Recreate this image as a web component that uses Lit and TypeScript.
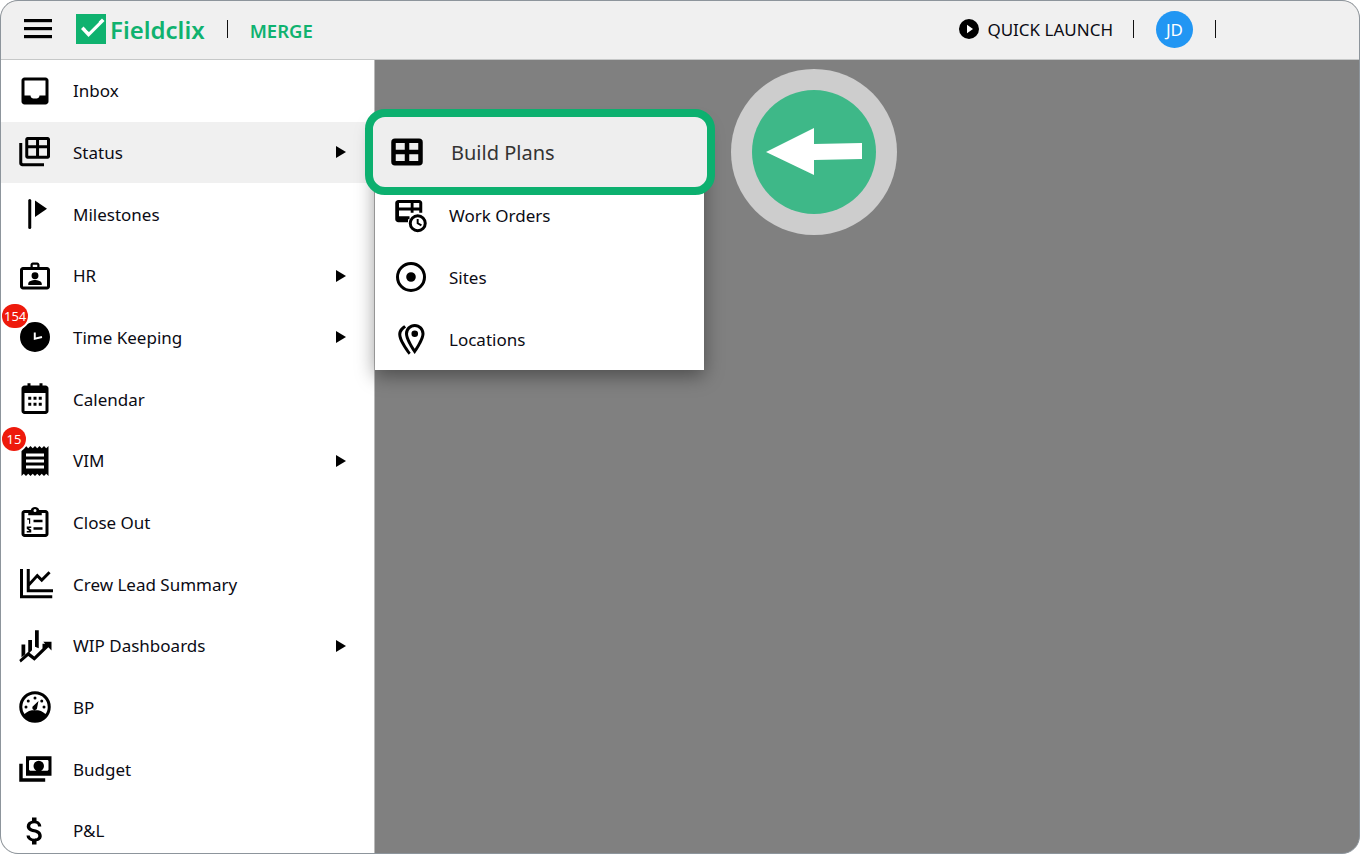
import { LitElement, html, svg, css } from "lit";
import { customElement } from "lit/decorators.js";

const p = (d: string) => svg`<path d=${d}></path>`;
const icons: Record<string, unknown> = {
  inbox: p("M19 3H5C3.9 3 3 3.9 3 5v14c0 1.1.9 2 2 2h14c1.1 0 2-.9 2-2V5c0-1.1-.9-2-2-2zm0 12h-4c0 1.66-1.35 2-3 2s-3-.34-3-2H5V5h14v10z"),
  status: svg`<path d="M7 2h13.5c.8 0 1.5.7 1.5 1.5V15c0 .8-.7 1.5-1.5 1.5H7c-.8 0-1.5-.7-1.5-1.5V3.500C5.500 2.700 6.200 2 7 2zm.5 2v3.500h5.200V4zm7.200 0v3.500H20V4zM7.500 9.500v5h5.200v-5zm7.200 0v5H20v-5z"></path><path d="M1.500 6h2v13c0 .3.200.500.500.500h14v2H3.500c-1.100 0-2-.9-2-2z"></path>`,
  flag: svg`<rect x="7.500" y="2" width="2" height="20" rx="1"></rect><path d="M12 3v11l8-5.500z"></path>`,
  badge: p("M9 6V4.500C9 3.700 9.700 3 10.500 3h3c.8 0 1.500.7 1.500 1.500V6h5c1.100 0 2 .9 2 2v11c0 1.100-.9 2-2 2H4c-1.100 0-2-.9-2-2V8c0-1.100.9-2 2-2zm1.500 0h3V4.500h-3zM4 8v11h16V8zm8 1.500a2.300 2.300 0 1 1 0 4.600 2.300 2.300 0 0 1 0-4.600zM7.500 18v-1c0-1.500 3-2.300 4.500-2.300s4.500.8 4.500 2.300v1z"),
  clock: svg`<path fill-rule="evenodd" d="M12 2a10 10 0 1 0 0 20 10 10 0 0 0 0-20zm-.8 7h1.300v3.300l4-1 .3 1.300-5.600 1.400z"></path>`,
  calendar: p("M7 1.500h2V3h6V1.500h2V3h2c1.100 0 2 .9 2 2v15c0 1.100-.9 2-2 2H5c-1.100 0-2-.9-2-2V5c0-1.100.9-2 2-2h2zM5 8v12h14V8zm2.500 2.500h2v2h-2zm3.500 0h2v2h-2zm3.500 0h2v2h-2zm-7 4h2v2h-2zm3.500 0h2v2h-2zm3.500 0h2v2h-2z"),
  receipt: p("M18 17H6v-2h12v2zm0-4H6v-2h12v2zm0-4H6V7h12v2zM3 22l1.500-1.500L6 22l1.500-1.500L9 22l1.500-1.500L12 22l1.500-1.500L15 22l1.500-1.500L18 22l1.500-1.500L21 22V2l-1.500 1.500L18 2l-1.500 1.500L15 2l-1.500 1.500L12 2l-1.500 1.500L9 2 7.500 3.500 6 2 4.500 3.500 3 2v20z"),
  clip: p("M5 4h4.200a3 3 0 0 1 5.600 0H19c1.100 0 2 .9 2 2v14c0 1.100-.9 2-2 2H5c-1.100 0-2-.9-2-2V6c0-1.100.9-2 2-2zm7-.7a1 1 0 1 0 0 2 1 1 0 0 0 0-2zM5 6v14h14V6h-2.500v1.500h-9V6zm1.800 3.500h2v3.700H8V10.500h-1.200zm4.200 1h6v1.700h-6zM6.500 15h3v1h-1.800l1.800 1.200V19h-3v-1h1.800l-1.800-1.500zm4.500.5h6v1.700h-6z"),
  chart: p("M2 2h2v17.500h19.500v2H2zm4.500 0h2v8.500l5-5.500 3 3L21 3.500l1.400 1.400-5.900 6-3-3-5 5.500V15.500h17v2h-19z"),
  wip: p("M3 11h2.500v6.500L3 19.500zm4.500-3H10v6.800l-2.500 2.500zm4.500-6.500h2.500v12L12 12.500zm5 9h2.500v1.800L17 15.800zM2.500 23l-1-1.700 6-5.500 4 3.200 8-7.800-2-2h5.500V15l-2.100-2.100-9.300 9-4.100-3.200z"),
  gauge: p("M12 1.500a10.500 10.500 0 1 0 0 21 10.500 10.500 0 0 0 0-21zm0 2a8.500 8.500 0 0 1 8.500 8.500c0 1.800-.5 3.400-1.500 4.700-1.600-1.600-4.100-2.700-7-2.700s-5.400 1.100-7 2.700A8.400 8.400 0 0 1 3.500 12 8.500 8.500 0 0 1 12 3.500zM12 5a1 1 0 1 0 0 2 1 1 0 0 0 0-2zM7.500 7a1 1 0 1 0 0 2 1 1 0 0 0 0-2zm9 0a1 1 0 1 0 0 2 1 1 0 0 0 0-2zM6 11a1 1 0 1 0 0 2 1 1 0 0 0 0-2zm12 0a1 1 0 1 0 0 2 1 1 0 0 0 0-2zm-3.700-3L11 11.100a1.600 1.600 0 1 0 2.400 1.500z"),
  money: p("M6 3.500h17v13H6zm2.500 2.500a2.500 2.500 0 0 1-.500.500v6c.3.200.5.400.6.600h11.800c.2-.2.400-.4.600-.6v-6a2.500 2.500 0 0 1-.500-.500zm6 .500a3.500 3.500 0 1 1 0 7 3.500 3.500 0 0 1 0-7zM1.500 8.500h2.300v9.700h15v2.300H1.500z"),
  dollar: p("M11.800 10.900c-2.270-.59-3-1.200-3-2.150 0-1.090 1.010-1.850 2.700-1.850 1.780 0 2.440.85 2.500 2.100h2.210c-.07-1.720-1.120-3.300-3.210-3.810V3h-3v2.160c-1.940.42-3.500 1.680-3.500 3.610 0 2.310 1.910 3.460 4.700 4.130 2.500.6 3 1.480 3 2.410 0 .69-.49 1.790-2.700 1.790-2.060 0-2.870-.92-2.980-2.100h-2.200c.12 2.190 1.760 3.420 3.680 3.830V21h3v-2.150c1.950-.37 3.500-1.500 3.500-3.550 0-2.840-2.430-3.810-4.700-4.400z"),
  table: svg`<path d="M4 3h16a2.500 2.500 0 0 1 2.500 2.500v13A2.500 2.500 0 0 1 20 21H4a2.500 2.500 0 0 1-2.500-2.500v-13A2.500 2.500 0 0 1 4 3zm.5 3v4.500h6V6zm9 0v4.500h6V6zm-9 7.500V18h6v-4.500zm9 0V18h6v-4.500z"></path>`,
  workorder: svg`<path d="M3.500 2h14c1.100 0 2 .9 2 2v6.500h-2V9h-3.800v1.500h-1.900V9H4v3.800h7v2h-1v2H3.500c-1.100 0-2-.9-2-2V4c0-1.100.9-2 2-2zM4 4v3h7.800V4zm9.700 0v3h3.800V4z"></path><path d="M16.500 11.500a6 6 0 1 0 0 12 6 6 0 0 0 0-12zm0 2a4 4 0 1 1 0 8 4 4 0 0 1 0-8zm-.7 1.200v3.100l2.800 1.700.7-1.100-2.200-1.300v-2.400z"></path>`,
  sites: p("M12 2a10 10 0 1 0 0 20 10 10 0 0 0 0-20zm0 2a8 8 0 1 1 0 16 8 8 0 0 1 0-16zm0 4.800a3.200 3.200 0 1 0 0 6.400 3.200 3.200 0 0 0 0-6.400z"),
  pin: p("M14.500 2c3.600 0 6.500 2.900 6.500 6.500 0 4.600-6.500 13.500-6.500 13.500S8 13.100 8 8.500C8 4.900 10.900 2 14.500 2zm0 2A4.500 4.500 0 0 0 10 8.500c0 2.700 2.900 7.500 4.500 10 1.600-2.500 4.500-7.300 4.500-10A4.500 4.500 0 0 0 14.500 4zm0 2.300a2.200 2.200 0 1 1 0 4.400 2.200 2.200 0 0 1 0-4.400zM7.500 2.800l1.200 1.500C6.900 5.500 5.500 7.200 5.500 9c0 3 3.800 8.700 6.300 12.200L10.500 22.500C7 18 3.500 12.500 3.500 9c0-2.800 1.700-4.900 4-6.200z"),
};

const ic = (name: string, cls = "icon") =>
  html`<svg class=${cls} viewBox="0 0 24 24" aria-hidden="true">${icons[name]}</svg>`;

interface Item { label: string; icon: string; more?: boolean; active?: boolean; badge?: string; }

const items: Item[] = [
  { label: "Inbox", icon: "inbox" },
  { label: "Status", icon: "status", more: true, active: true },
  { label: "Milestones", icon: "flag" },
  { label: "HR", icon: "badge", more: true },
  { label: "Time Keeping", icon: "clock", more: true, badge: "154" },
  { label: "Calendar", icon: "calendar" },
  { label: "VIM", icon: "receipt", more: true, badge: "15" },
  { label: "Close Out", icon: "clip" },
  { label: "Crew Lead Summary", icon: "chart" },
  { label: "WIP Dashboards", icon: "wip", more: true },
  { label: "BP", icon: "gauge" },
  { label: "Budget", icon: "money" },
  { label: "P&L", icon: "dollar" },
];

const subItems = [
  { label: "Work Orders", icon: "workorder" },
  { label: "Sites", icon: "sites" },
  { label: "Locations", icon: "pin" },
];

@customElement("app-root")
export class AppRoot extends LitElement {
  static styles = css`
    :host { display: block; width: 1360px; height: 854px; background: #fff; font-family: "Noto Sans", "Liberation Sans", sans-serif; color: #0b0b14; }
    .window { position: relative; box-sizing: border-box; width: 1360px; height: 854px; border: 1px solid #8d959c; border-radius: 18px; overflow: hidden; display: flex; flex-direction: column; background: #808080; }
    .header { flex: none; box-sizing: border-box; height: 59px; background: #f0f0f0; border-bottom: 1px solid #c6c8c8; display: flex; align-items: center; padding-left: 23px; }
    .burger { width: 28px; height: 20px; display: block; margin-top: -2px; }
    .logo { width: 30px; height: 30px; margin-left: 24px; margin-top: -3px; display: block; }
    .brand { margin-left: 4px; font-size: 24px; font-weight: 600; color: #0fb26f; margin-top: -2px; letter-spacing: 0; }
    .sep { width: 1px; height: 18px; background: #111; flex: none; margin-top: -3px; }
    .sep.a { margin-left: 22px; }
    .merge { margin-left: 22px; font-size: 18.500px; font-weight: 600; color: #0fb26f; }
    .spacer { flex: 1; }
    .play { width: 20px; height: 20px; display: block; margin-top: -2px; }
    .quick { margin-left: 8px; font-size: 17px; margin-top: -2px; }
    .sep.b { margin-left: 20px; }
    .avatar { margin-left: 22px; width: 37px; height: 37px; border-radius: 50%; background: #2196f3; color: #fff; font-size: 17px; display: flex; align-items: center; justify-content: center; margin-top: -2px; }
    .sep.c { margin-left: 22px; margin-right: 143px; }
    .body { flex: 1; min-height: 0; display: flex; }
    .side { width: 373px; flex: none; background: #fff; border-right: 1px solid #b9b9b9; overflow: hidden; }
    .row { position: relative; box-sizing: border-box; height: 61.67px; display: flex; align-items: center; padding-left: 16px; font-size: 17px; }
    .row.active { background: #f0f0f0; }
    .icon { width: 36px; height: 36px; fill: #000; flex: none; display: block; }
    .label { margin-left: 20px; flex: 1; }
    .caret { width: 0; height: 0; border-left: 10px solid #000; border-top: 6px solid transparent; border-bottom: 6px solid transparent; margin-right: 28px; }
    .badge { position: absolute; left: 1px; top: -3px; min-width: 24px; height: 24px; padding: 0 2px; box-sizing: border-box; border-radius: 14px; background: #ee1a0c; color: #fff; font-size: 13px; display: flex; align-items: center; justify-content: center; box-shadow: 0 0 0 2px #fff; }
    .main { flex: 1; }
    .menu { position: absolute; left: 374px; top: 121px; width: 329px; background: #fff; box-shadow: 0 6px 18px rgba(0,0,0,.4); padding-top: 62px; }
    .mrow { box-sizing: border-box; height: 62px; display: flex; align-items: center; padding-left: 18px; font-size: 17px; }
    .mrow .label { margin-left: 20px; }
    .focus { position: absolute; left: 364px; top: 108px; box-sizing: border-box; width: 350px; height: 86px; border: 8px solid #0cb06f; border-radius: 20px; background: #eeeeee; display: flex; align-items: center; padding-left: 16px; color: #333; font-size: 20px; }
    .focus .label { margin-left: 26px; }
    .pointer { position: absolute; left: 729px; top: 67px; width: 168px; height: 168px; display: block; }
  </style>`;

  render() {
    return html`
      <div class="window">
        <header class="header">
          <svg class="burger" viewBox="0 0 28 20"><rect y="0" width="28" height="3.200"></rect><rect y="8" width="28" height="3.200"></rect><rect y="16" width="28" height="3.200"></rect></svg>
          <svg class="logo" viewBox="0 0 30 30"><path fill="#0fb26f" d="M0 0h23l-6 6-2 2H0zM0 8h30v22H0z"></path><path fill="#0fb26f" d="M0 0h30v30H0z"></path><path fill="#fff" d="M5 15l2.500-2.500 5 5L26 4.500l2.500 2.500-16 16z"></path><path fill="#0fb26f" d="M11 14l2 2 9-9 1 1-10 10-3-3z"></path></svg>
          <span class="brand">Fieldclix</span>
          <span class="sep a"></span>
          <span class="merge">MERGE</span>
          <span class="spacer"></span>
          <svg class="play" viewBox="0 0 20 20"><circle cx="10" cy="10" r="10"></circle><path fill="#fff" d="M8 5.800v8.400l6-4.200z"></path></svg>
          <span class="quick">QUICK LAUNCH</span>
          <span class="sep b"></span>
          <span class="avatar">JD</span>
          <span class="sep c"></span>
        </header>
        <div class="body">
          <nav class="side">
            ${items.map((it) => html`
              <div class="row ${it.active ? "active" : ""}">
                ${ic(it.icon)}
                ${it.badge ? html`<span class="badge">${it.badge}</span>` : ""}
                <span class="label">${it.label}</span>
                ${it.more ? html`<span class="caret"></span>` : ""}
              </div>`)}
          </nav>
          <div class="main"></div>
        </div>
        <div class="menu">
          ${subItems.map((s) => html`<div class="mrow">${ic(s.icon)}<span class="label">${s.label}</span></div>`)}
        </div>
        <div class="focus">${ic("table")}<span class="label">Build Plans</span></div>
        <svg class="pointer" viewBox="0 0 168 168">
          <circle cx="84" cy="84" r="83" fill="#cdcdcd"></circle>
          <circle cx="84" cy="84" r="62" fill="#3eb888"></circle>
          <path fill="#fff" d="M36 84 L84 60 L84 76 L132 75 L132 91 L84 92 L84 107 Z"></path>
        </svg>
      </div>`;
  }
}
